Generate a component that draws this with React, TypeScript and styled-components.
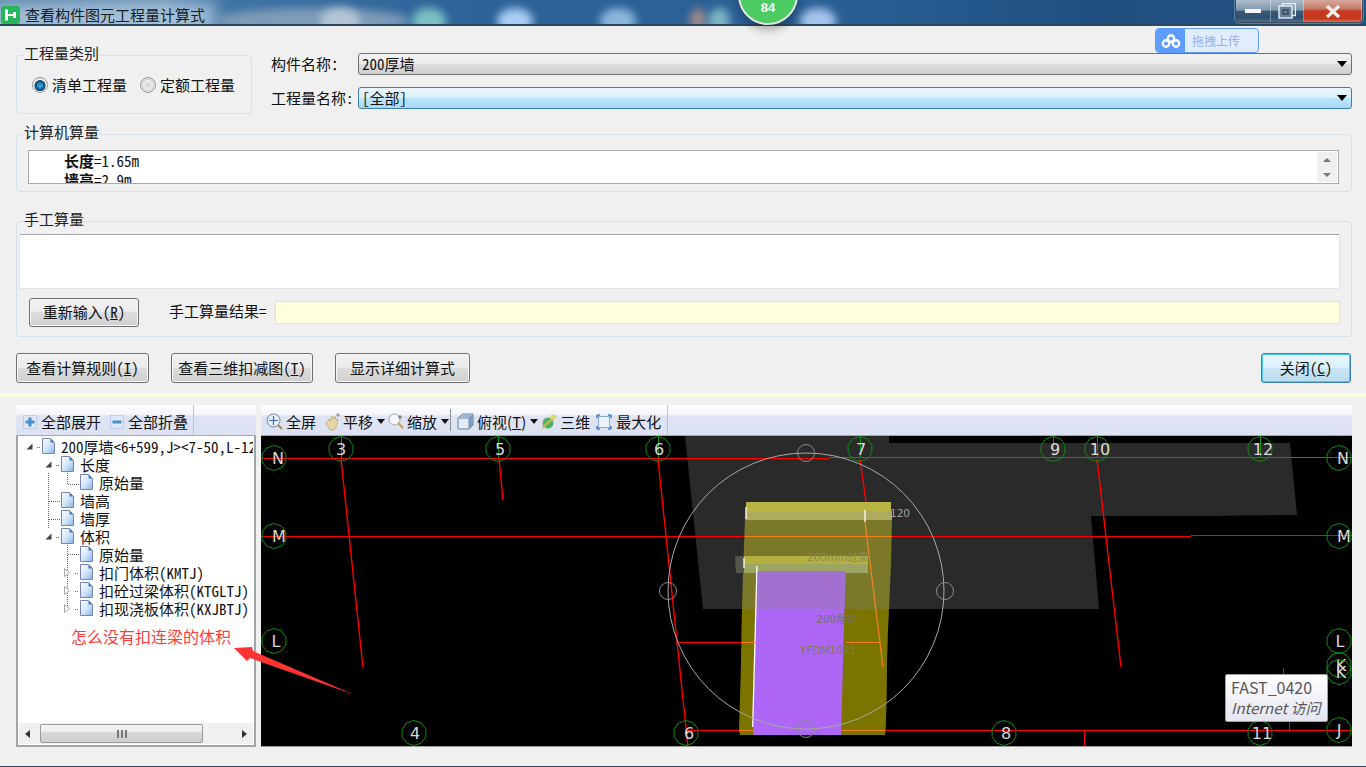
import React from 'react';
import styled, { createGlobalStyle } from 'styled-components';

const uiFont = `"Noto Sans Mono CJK SC", "Noto Sans CJK SC", "Liberation Mono", monospace`;

const GlobalStyle = createGlobalStyle`
  html, body { margin: 0; padding: 0; background: #f0f0f0; }
  * { box-sizing: border-box; }
  body { font-family: ${uiFont}; font-size: 15px; color: #111; }
`;

const Page = styled.div`
  position: relative;
  width: 1366px;
  height: 767px;
  overflow: hidden;
  display: flex;
  flex-direction: column;
  background: #f0f0f0;
`;

// title bar
const TitleBar = styled.div`
  position: relative;
  flex: none;
  height: 26px;
  display: flex;
  align-items: center;
  padding: 5px 0 0 1px;
  overflow: hidden;
  background: linear-gradient(90deg, #5a87ad 0, #6f98ba 12%, #3f73a6 17%, #2c6298 35%, #2a6096 60%, #1f4f82 80%, #23517f 100%);
  border-bottom: 2px solid;
  border-image: linear-gradient(#e6eef5 0 50%, #2c4760 50%) 1;
`;

const TitleGlow = styled.div`
  position: absolute;
  left: -10px;
  top: 4px;
  width: 225px;
  height: 30px;
  background: rgba(205, 222, 236, 0.6);
  filter: blur(7px);
`;

const Blob = styled.div<{ $x: number; $w: number; $c: string }>`
  position: absolute;
  left: ${(p) => p.$x}px;
  top: 8px;
  width: ${(p) => p.$w}px;
  height: 26px;
  border-radius: 50%;
  background: ${(p) => p.$c};
  filter: blur(4px);
`;

const TitleText = styled.span`
  position: relative;
  margin-left: 5px;
  font-family: "Noto Sans CJK SC", sans-serif;
  font-size: 15px;
  line-height: 18px;
  color: #16202a;
`;

const WindowControls = styled.div`
  position: absolute;
  top: 0;
  left: 1235px;
  display: flex;
  height: 23px;
  border: 1px solid #3b4d5e;
  border-top: 0;
  border-radius: 0 0 5px 5px;
  overflow: hidden;
  box-shadow: 0 0 0 1px rgba(255, 255, 255, 0.25);
`;

const ControlBtn = styled.div<{ $w: number; $close?: boolean }>`
  width: ${(p) => p.$w}px;
  display: flex;
  align-items: center;
  justify-content: center;
  border-right: 1px solid rgba(255, 255, 255, 0.35);
  background: ${(p) =>
    p.$close
      ? 'linear-gradient(#d8a79b 0, #c27a68 40%, #c8371f 50%, #c33a20 85%, #e0705a 100%)'
      : 'linear-gradient(#aebdcb 0, #8097ad 45%, #3c5a78 52%, #2f5072 80%, #4d6d8d 100%)'};
`;

const Badge = styled.div`
  position: absolute;
  z-index: 3;
  left: 738px;
  top: -35px;
  width: 60px;
  height: 60px;
  border-radius: 50%;
  background: #4ccb63;
  border: 2px solid #dfe6e0;
  box-shadow: 0 5px 8px rgba(0, 0, 0, 0.3);
  color: #fff;
  font-family: "Liberation Sans", sans-serif;
  font-weight: bold;
  font-size: 13px;
  text-align: center;
  padding-top: 33px;
  line-height: 15px;
`;

const UploadWidget = styled.div`
  position: absolute;
  z-index: 3;
  left: 1155px;
  top: 28px;
  width: 104px;
  height: 25px;
  display: flex;
  align-items: center;
  border: 1px solid #5c9dff;
  border-radius: 4px;
  overflow: hidden;
  background: #e2ecff;
  color: #94aef5;
  font-family: "Noto Sans CJK SC", sans-serif;
  font-size: 12px;
`;

const UploadIcon = styled.div`
  width: 29px;
  height: 100%;
  margin-right: 7px;
  display: flex;
  align-items: center;
  justify-content: center;
  background: #5c9dff;
`;

// form parts
const Section = styled.div`
  padding: 0 14px 0 16px;
`;

const TopRow = styled(Section)`
  display: flex;
  padding-top: 21px;
`;

const Group = styled.fieldset<{ $w?: number; $mt?: number }>`
  margin: ${(p) => p.$mt ?? 0}px 0 0 0;
  padding: 0;
  min-width: 0;
  width: ${(p) => (p.$w ? `${p.$w}px` : '100%')};
  border: 1px solid #d6e0e8;
  border-radius: 4px;
  flex: none;
`;

const Legend = styled.legend`
  position: relative;
  top: -2px;
  margin-left: 7px;
  padding: 0;
  font-size: 15px;
  line-height: 16px;
  color: #222;
`;

const RadioRow = styled.div`
  display: flex;
  align-items: center;
  height: 50px;
  padding: 0 0 7px 15px;
`;

const RadioItem = styled.label`
  display: flex;
  align-items: center;
  gap: 4px;
  margin-right: 13px;
`;

const RadioDot = styled.span<{ $on?: boolean }>`
  width: 16px;
  height: 16px;
  border-radius: 50%;
  border: 1px solid #9a9a9a;
  background: ${(p) =>
    p.$on
      ? 'radial-gradient(circle at 50% 55%, #45b8e8 0, #0f5f96 38%, #0c4368 50%, #f3f3f3 56%, #ddd 100%)'
      : 'radial-gradient(circle, #d5d5d5 0, #eee 50%, #c8c8c8 58%, #f4f4f4 70%, #ddd 100%)'};
`;

const FormCol = styled.div`
  flex: 1;
  margin-left: 19px;
  padding-top: 6px;
  display: flex;
  flex-direction: column;
  gap: 12px;
`;

const FormRow = styled.div`
  display: flex;
  align-items: center;
  height: 22px;
`;

const FormLabel = styled.span`
  width: 87px;
  flex: none;
  white-space: pre;
  padding-bottom: 2px;
`;

const Select = styled.div<{ $active?: boolean }>`
  flex: 1;
  height: 22px;
  display: flex;
  align-items: center;
  justify-content: space-between;
  padding: 0 4px 2px 3px;
  border-radius: 3px;
  border: 1px solid ${(p) => (p.$active ? '#3c7fb1' : '#707070')};
  background: ${(p) =>
    p.$active
      ? 'linear-gradient(#eaf6fd 0, #d9f0fc 50%, #bee6fd 50%, #a7d9f5 100%)'
      : 'linear-gradient(#f2f2f2 0, #ebebeb 50%, #dddddd 50%, #cfcfcf 100%)'};
`;

const Caret = styled.span`
  width: 0;
  height: 0;
  margin-top: 2px;
  border-left: 5px solid transparent;
  border-right: 5px solid transparent;
  border-top: 6px solid #000;
`;

const CalcBox = styled.div`
  position: relative;
  margin: 8px 12px 7px 11px;
  height: 34px;
  background: #fff;
  border: 1px solid #ababab;
  overflow: hidden;
  padding-left: 35px;
  line-height: 19px;
  font-size: 15px;
`;

const CalcLine = styled.div`
  b { font-weight: bold; }
`;

const SpinBar = styled.div`
  position: absolute;
  top: 1px;
  right: 1px;
  bottom: 1px;
  width: 20px;
  background: #f0f0f0;
  display: flex;
  flex-direction: column;
  align-items: center;
  justify-content: center;
  gap: 11px;
`;

const Tick = styled.span<{ $down?: boolean }>`
  width: 0;
  height: 0;
  border-left: 4px solid transparent;
  border-right: 4px solid transparent;
  ${(p) => (p.$down ? 'border-top: 4px solid #777;' : 'border-bottom: 4px solid #777;')}
`;

const ManualArea = styled.div`
  margin: 5px 11px 0 2px;
  height: 55px;
  background: #fff;
  border: 1px solid #e2e2e6;
  border-top: 1px solid #a4a4ac;
  border-radius: 2px;
`;

const ManualRow = styled.div`
  display: flex;
  align-items: flex-start;
  height: 47px;
  padding: 9px 11px 0 12px;
`;

const Button = styled.button<{ $w: number; $h?: number; $focus?: boolean; $ml?: number }>`
  width: ${(p) => p.$w}px;
  height: ${(p) => p.$h ?? 30}px;
  margin-left: ${(p) => p.$ml ?? 0}px;
  padding: 0 0 2px;
  flex: none;
  font-family: inherit;
  font-size: 15px;
  color: #111;
  border-radius: 3px;
  border: 1px solid ${(p) => (p.$focus ? '#3c7fb1' : '#707070')};
  background: ${(p) =>
    p.$focus
      ? 'linear-gradient(#eaf6fd 0, #d9f0fc 50%, #cbe6f5 50%, #b8dcee 100%)'
      : 'linear-gradient(#f2f2f2 0, #ebebeb 50%, #dddddd 50%, #cfcfcf 100%)'};
  box-shadow: ${(p) => (p.$focus ? 'inset 0 0 0 1px #47c8f0' : 'inset 0 0 0 1px #f8f8f8')};
  u { text-underline-offset: 1px; }
`;

const ResultLabel = styled.span`
  margin: 2px 0 0 30px;
  width: 106px;
  flex: none;
`;

const ResultInput = styled.div`
  flex: 1;
  height: 23px;
  margin-top: 3px;
  background: #ffffe0;
  border: 1px solid #e0e0e0;
`;

const ActionRow = styled(Section)`
  display: flex;
  margin-top: 16px;
  padding-right: 15px;
`;

const Divider = styled.div`
  height: 4px;
  margin-top: 10px;
  background: #fdfde3;
`;

const Workspace = styled(Section)`
  display: flex;
  gap: 5px;
  margin-top: 8px;
  height: 342px;
`;

const TreePanel = styled.div`
  position: relative;
  width: 240px;
  flex: none;
  display: flex;
  flex-direction: column;
`;

const ViewPanel = styled.div`
  flex: 1;
  display: flex;
  flex-direction: column;
  min-width: 0;
`;

const Toolbar = styled.div`
  position: relative;
  height: 31px;
  flex: none;
  display: flex;
  align-items: center;
  padding: 3px 0 0 5px;
  white-space: nowrap;
  font-family: "Noto Sans CJK SC", sans-serif;
  background: linear-gradient(#fdfdfe 0, #f5f6fb 30%, #dfe4f4 38%, #dde2f3 100%);
  border-bottom: 1px solid #a8a8a8;
`;

const ToolSep = styled.span<{ $x: number; $dark?: boolean }>`
  position: absolute;
  left: ${(p) => p.$x}px;
  top: ${(p) => (p.$dark ? 4 : 0)}px;
  bottom: ${(p) => (p.$dark ? 4 : 0)}px;
  width: 1px;
  background: ${(p) => (p.$dark ? '#8a8d96' : '#c0c3cc')};
`;

const ToolIcon = styled.span<{ $ml?: number; $mr?: number }>`
  display: inline-flex;
  margin-left: ${(p) => p.$ml ?? 0}px;
  margin-right: ${(p) => p.$mr ?? 4}px;
`;

const ToolCaret = styled.span<{ $ml?: number; $mr?: number }>`
  width: 0;
  height: 0;
  margin-left: ${(p) => p.$ml ?? 4}px;
  margin-right: ${(p) => p.$mr ?? 3}px;
  border-left: 4px solid transparent;
  border-right: 4px solid transparent;
  border-top: 5px solid #111;
`;

const TreeBody = styled.div`
  position: relative;
  flex: 1;
  display: flex;
  flex-direction: column;
  border: solid #a0a5aa;
  border-width: 0 2px 2px 2px;
  background: #fff;
  min-height: 0;
`;

const TreeRows = styled.div`
  position: relative;
  flex: 1;
  margin-right: 1px;
  padding-top: 1px;
  overflow: hidden;
`;

const TreeRow = styled.div<{ $level: number }>`
  position: relative;
  display: flex;
  align-items: center;
  height: 18px;
  padding-left: ${(p) => 8 + p.$level * 19}px;
  white-space: nowrap;
`;

const Expander = styled.span`
  width: 16px;
  flex: none;
  display: flex;
  align-items: center;
`;

const DocIcon = styled.span`
  display: inline-flex;
  flex: none;
  margin-right: 6px;
`;

const HScroll = styled.div`
  flex: none;
  height: 21px;
  margin: 1px;
  display: flex;
  align-items: center;
  background: #f0f0f0;
  padding: 0 6px;
`;

const Thumb = styled.div`
  width: 163px;
  height: 19px;
  margin-left: 10px;
  margin-right: auto;
  border: 1px solid #9a9a9a;
  border-radius: 2px;
  background: linear-gradient(#f4f4f4 0, #ececec 40%, #d6d6d6 45%, #cfcfcf 100%);
  display: flex;
  align-items: center;
  justify-content: center;
  gap: 2px;
`;

const Grip = styled.i`
  width: 2px;
  height: 8px;
  background: #777;
`;

const SideArrow = styled.span<{ $dir: 'left' | 'right' }>`
  width: 0;
  height: 0;
  border-top: 4px solid transparent;
  border-bottom: 4px solid transparent;
  ${(p) => (p.$dir === 'left' ? 'border-right: 5px solid #333;' : 'border-left: 5px solid #333;')}
`;

const CanvasWrap = styled.div`
  position: relative;
  flex: 1;
  min-height: 0;
  background: #000;
  border-bottom: 1px solid #9a9a9a;
`;

const CadSvg = styled.svg`
  display: block;
  width: 1091px;
  height: 310px;
`;

const ConnectorSvg = styled.svg`
  position: absolute;
  left: 0;
  top: 0;
  pointer-events: none;
`;

const Tooltip = styled.div`
  position: absolute;
  left: 964px;
  top: 238px;
  width: 103px;
  height: 48px;
  padding: 2px 0 0 5px;
  background: linear-gradient(#fff 0, #e4e5f0 100%);
  border: 1px solid #a0a0a0;
  border-radius: 2px;
  color: #575757;
  font-family: "Noto Sans CJK SC", sans-serif;
  font-size: 16px;
  line-height: 20px;
  white-space: nowrap;
  overflow: hidden;
  em { font-size: 15px; }
`;

const Note = styled.div`
  position: absolute;
  z-index: 4;
  left: 71px;
  top: 626px;
  color: #ff3b3b;
  font-family: "Noto Sans CJK SC", sans-serif;
  font-size: 16px;
  line-height: 20px;
  white-space: nowrap;
`;

const NoteArrow = styled.svg`
  position: absolute;
  z-index: 4;
  left: 230px;
  top: 640px;
`;

const Footer = styled.div`
  flex: 1;
  position: relative;
  border-bottom: 1px solid #33475a;
`;

// drawings
const Doc = () => (
  <svg width="13" height="16" viewBox="0 0 13 16">
    <defs>
      <linearGradient id="docFill" x1="0" y1="0" x2="1" y2="1">
        <stop offset="0" stopColor="#ffffff" />
        <stop offset="0.55" stopColor="#cfe3f7" />
        <stop offset="1" stopColor="#7fb4e6" />
      </linearGradient>
    </defs>
    <path d="M.5.5H8.5L12.5 4.5V15.5H.5Z" fill="url(#docFill)" stroke="#7a82b8" />
    <path d="M8.5.5V4.5H12.5Z" fill="#3f7fc9" />
  </svg>
);

const TreeTriangle = ({ open }: { open: boolean }) =>
  open ? (
    <svg width="7" height="7" viewBox="0 0 7 7"><path d="M6.5 .5V6.5H.5Z" fill="#444" /></svg>
  ) : (
    <svg width="6" height="9" viewBox="0 0 6 9"><path d="M.5 .5L5.5 4.5L.5 8.5Z" fill="#fff" stroke="#a8a8a8" /></svg>
  );

const PlusMinus = ({ plus }: { plus?: boolean }) => (
  <svg width="14" height="14" viewBox="0 0 14 14">
    <rect x=".5" y=".5" width="13" height="13" fill="#dfe6f6" stroke="#c3cce4" />
    <rect x="2.5" y="5.5" width="9" height="3" fill="#4a8fc9" />
    {plus && <rect x="5.5" y="2.5" width="3" height="9" fill="#4a8fc9" />}
  </svg>
);

const ZoomFullIcon = () => (
  <svg width="17" height="17" viewBox="0 0 17 17">
    <circle cx="7.5" cy="7.5" r="6.5" fill="#e8eef8" stroke="#7e8aa6" />
    <path d="M7.5 3v9M3 7.5h9" stroke="#3a6fb0" strokeWidth="1.2" />
    <path d="M12 12l4 4" stroke="#a08a5a" strokeWidth="2" />
  </svg>
);

const HandIcon = () => (
  <svg width="17" height="18" viewBox="0 0 17 18">
    <path d="M2 11l3-5 1 2 2-5 1 3 2-3 1 4 2-1-1 6-3 5H6Z" fill="#e4d7a8" stroke="#b8a468" strokeDasharray="2 1" />
    <path d="M12 2h4M14 0v4" stroke="#8a8a8a" />
  </svg>
);

const ZoomInIcon = () => (
  <svg width="16" height="17" viewBox="0 0 16 17">
    <circle cx="6.5" cy="6.5" r="5.5" fill="#f4f6fb" stroke="#a0a6b4" />
    <path d="M10 10l5 5" stroke="#c2a04c" strokeWidth="2" />
    <path d="M12 2v4M10 4h4" stroke="#6a6a6a" />
  </svg>
);

const CubeIcon = () => (
  <svg width="17" height="17" viewBox="0 0 17 17">
    <path d="M1 5L5 1H16V12L12 16H1Z" fill="#e4edf7" stroke="#6a7f9a" />
    <path d="M1 5H12V16M12 5L16 1" fill="none" stroke="#6a7f9a" />
    <path d="M1 5L5 1H16L12 5Z" fill="#9db6d3" />
    <path d="M12 5L16 1V12L12 16Z" fill="#7d9cc0" />
  </svg>
);

const PlanetIcon = () => (
  <svg width="16" height="17" viewBox="0 0 16 17">
    <circle cx="7" cy="10" r="5.5" fill="#58b065" />
    <path d="M1 15L15 3" stroke="#c8c050" strokeWidth="2" />
    <circle cx="12" cy="4" r="2.5" fill="#e2d66a" />
  </svg>
);

const MaximizeIcon = () => (
  <svg width="16" height="16" viewBox="0 0 16 16">
    <rect x="2.5" y="2.5" width="11" height="11" fill="#eef2fa" stroke="#8aa8d0" />
    <path d="M1 1h3M1 1v3M15 1h-3M15 1v3M1 15h3M1 15v-3M15 15h-3M15 15v-3" stroke="#3f86d6" strokeWidth="1.6" fill="none" />
  </svg>
);

const bubblePoints = (cx: number, cy: number, r: number) =>
  Array.from({ length: 10 }, (_, i) => {
    const a = (Math.PI * 2 * i) / 10 - Math.PI / 2;
    return `${(cx + r * Math.cos(a)).toFixed(1)},${(cy + r * Math.sin(a)).toFixed(1)}`;
  }).join(' ');

const bubbles = [
  { t: 'N', x: 274, y: 458, tx: 278 },
  { t: 'M', x: 274, y: 536, tx: 279 },
  { t: 'L', x: 274, y: 641, tx: 276 },
  { t: '3', x: 341, y: 449, tx: 341 },
  { t: '5', x: 498, y: 449, tx: 500 },
  { t: '6', x: 658, y: 449, tx: 659 },
  { t: '7', x: 860, y: 449, tx: 861 },
  { t: '9', x: 1053, y: 449, tx: 1055 },
  { t: '10', x: 1097, y: 449, tx: 1100 },
  { t: '12', x: 1260, y: 449, tx: 1263 },
  { t: 'N', x: 1339, y: 458, tx: 1343 },
  { t: 'M', x: 1339, y: 536, tx: 1344 },
  { t: 'L', x: 1339, y: 641, tx: 1340 },
  { t: 'K', x: 1339, y: 665, tx: 1341 },
  { t: 'K', x: 1339, y: 672, tx: 1341 },
  { t: 'J', x: 1339, y: 730, tx: 1339 },
  { t: '4', x: 414, y: 733, tx: 415 },
  { t: '6', x: 686, y: 733, tx: 689 },
  { t: '8', x: 1004, y: 733, tx: 1006 },
  { t: '11', x: 1260, y: 733, tx: 1262 },
];

const crispRed = [
  'M261 458.5H830',
  'M261 536.5H1191',
  'M1191 535.5H1352',
  'M686 730.5H1352',
  'M677 642.5H742',
  'M1084.5 730V747',
  'M1283.5 668V675',
  'M1289.5 722V730',
];

const slantRed = [
  'M341 459L363 668',
  'M499 459L503 500',
  'M658 459L688 747',
  'M860 459L866 502',
  'M1097 459L1121 667',
];

const CadDrawing = () => (
  <CadSvg viewBox="261 436 1091 310">
    <path d="M685 436L703 609H1099L1091 516H1196L1297 515L1290 443H889V436Z" fill="#2a2a2a" />
    <path d="M830 457.5H1352" stroke="#c83030" shapeRendering="crispEdges" />
    {crispRed.map((d) => (
      <path key={d} d={d} stroke="#f00" shapeRendering="crispEdges" fill="none" />
    ))}
    {slantRed.map((d) => (
      <path key={d} d={d} stroke="#f00" strokeWidth="1.4" fill="none" />
    ))}
    <path d="M745 519L746 511H892V519L891 563L889 609H742L743 573Z" fill="#7c7829" />
    <path d="M742 609L741.5 630L741 663L740 697L739 730L740 735H885L885.7 730L886.7 697L887 663L888 630L889 609Z" fill="#7b7500" />
    <path d="M746 502H891V511H746Z" fill="#b8b443" />
    <path d="M746 511H892V520H746Z" fill="#aeaa60" />
    <path d="M745 536.5H892" stroke="#f08020" shapeRendering="crispEdges" />
    <path d="M735 556H745V573H736Z" fill="#55564a" />
    <path d="M744 556H868V564H744Z" fill="#b3b03f" />
    <path d="M744 564H868V573H744Z" fill="#9da562" />
    <path d="M758 571H846L844.5 609H756Z" fill="#a170d0" />
    <path d="M756 609H844.5L841 735H753Z" fill="#ad66f5" />
    <path d="M757 566L752.7 727M746 507V519M744 558V568M865 510V522" stroke="#fff" strokeWidth="1.3" fill="none" />
    <path d="M865 522L883 667" stroke="#f08020" strokeWidth="1.3" fill="none" />
    <path d="M742 642.5H756M846 642.5H880M739 730.5H753M841 730.5H885" stroke="#f08020" shapeRendering="crispEdges" fill="none" />
    <circle cx="806" cy="591" r="138" fill="none" stroke="#a8a8a8" />
    <circle cx="806" cy="453" r="8.5" fill="none" stroke="#8a8a8a" />
    <circle cx="668" cy="591" r="8.5" fill="none" stroke="#8a8a8a" />
    <circle cx="945" cy="591" r="8.5" fill="none" stroke="#8a8a8a" />
    <circle cx="806" cy="729" r="8.5" fill="none" stroke="#8a8a8a" />
    <g fontFamily='"DejaVu Sans", "Noto Sans CJK SC", sans-serif' fontSize="10.5">
      <text x="890" y="517" fill="#a0a0a0">120</text>
      <text x="807" y="561" fill="#8c8c52">200mm过梁</text>
      <text x="816" y="623" fill="#70706a">200厚墙</text>
      <text x="800" y="654" fill="#7d7d40">YFDM1021</text>
    </g>
    {[341, 498, 658, 860, 1053, 1097, 1260].map((x) => (
      <path key={x} d={`M${x}.5 437V458`} stroke="#0c8f0c" />
    ))}
    {bubbles.map((b, i) => (
      <g key={i}>
        <polygon points={bubblePoints(b.x, b.y, 12.5)} fill="none" stroke="#0c8f0c" />
        <text x={b.tx} y={b.y + 6} textAnchor="middle" fontFamily='"DejaVu Sans", sans-serif' fontSize="16" fill="#dadada">{b.t}</text>
      </g>
    ))}
  </CadSvg>
);

type TreeItem = { label: string; level: number; exp?: 'open' | 'closed' };

const treeItems: TreeItem[] = [
  { label: '200厚墙<6+599,J><7-50,L-120>', level: 0, exp: 'open' },
  { label: '长度', level: 1, exp: 'open' },
  { label: '原始量', level: 2 },
  { label: '墙高', level: 1 },
  { label: '墙厚', level: 1 },
  { label: '体积', level: 1, exp: 'open' },
  { label: '原始量', level: 2 },
  { label: '扣门体积(KMTJ)', level: 2, exp: 'closed' },
  { label: '扣砼过梁体积(KTGLTJ)', level: 2, exp: 'closed' },
  { label: '扣现浇板体积(KXJBTJ)', level: 2, exp: 'closed' },
];

export default function App() {
  return (
    <Page>
      <GlobalStyle />
      <TitleBar>
        <TitleGlow />
        <Blob $x={215} $w={195} $c="#7f9bb8" />
        <Blob $x={320} $w={40} $c="#b4c6d6" />
        <Blob $x={412} $w={34} $c="#7cc0c4" />
        <Blob $x={497} $w={36} $c="#a9cdf4" />
        <Blob $x={600} $w={36} $c="#8cb6dd" />
        <Blob $x={690} $w={16} $c="#a08a8a" />
        <Blob $x={708} $w={22} $c="#7fb4c4" />
        <Blob $x={800} $w={36} $c="#a6c4ea" />
        <svg width="19" height="18" viewBox="0 0 19 18" style={{ position: 'relative' }}>
          <rect width="19" height="18" rx="3" fill="#27b55a" />
          <path d="M4 3.5H7V8H12V6H15V12H12V10H7V14.5H4Z" fill="#fff" />
        </svg>
        <TitleText>查看构件图元工程量计算式</TitleText>
        <WindowControls>
          <ControlBtn $w={35}>
            <svg width="16" height="4"><rect width="16" height="4" fill="#f4f6f8" /></svg>
          </ControlBtn>
          <ControlBtn $w={33}>
            <svg width="18" height="16" viewBox="0 0 18 16">
              <rect x="4.5" y=".5" width="13" height="12" fill="none" stroke="#e8eef4" strokeWidth="1.4" />
              <rect x="1" y="3" width="13" height="12" fill="#6a8298" stroke="#e8eef4" strokeWidth="1.4" />
              <rect x="5" y="7" width="5" height="4" fill="none" stroke="#33485c" strokeWidth="1.4" />
            </svg>
          </ControlBtn>
          <ControlBtn $w={58} $close>
            <svg width="16" height="13" viewBox="0 0 16 13">
              <path d="M2 1L14 12M14 1L2 12" stroke="#f4eeea" strokeWidth="3.4" />
            </svg>
          </ControlBtn>
        </WindowControls>
      </TitleBar>
      <Badge>84</Badge>
      <UploadWidget>
        <UploadIcon>
          <svg width="20" height="14" viewBox="0 0 20 14">
            <g fill="none" stroke="#fff" strokeWidth="2.4">
              <circle cx="10" cy="4.5" r="3.2" />
              <circle cx="5" cy="9.5" r="3.2" />
              <circle cx="15" cy="9.5" r="3.2" />
            </g>
          </svg>
        </UploadIcon>
        拖拽上传
      </UploadWidget>

      <TopRow>
        <Group $w={236}>
          <Legend>工程量类别</Legend>
          <RadioRow>
            <RadioItem><RadioDot $on />清单工程量</RadioItem>
            <RadioItem><RadioDot />定额工程量</RadioItem>
          </RadioRow>
        </Group>
        <FormCol>
          <FormRow>
            <FormLabel>构件名称：</FormLabel>
            <Select>200厚墙<Caret /></Select>
          </FormRow>
          <FormRow>
            <FormLabel>工程量名称:</FormLabel>
            <Select $active>[全部]<Caret /></Select>
          </FormRow>
        </FormCol>
      </TopRow>

      <Section>
        <Group $mt={12}>
          <Legend>计算机算量</Legend>
          <CalcBox>
            <CalcLine><b>长度</b>=1.65m</CalcLine>
            <CalcLine><b>墙高</b>=2.9m</CalcLine>
            <SpinBar><Tick /><Tick $down /></SpinBar>
          </CalcBox>
        </Group>
        <Group $mt={21}>
          <Legend>手工算量</Legend>
          <ManualArea />
          <ManualRow>
            <Button $w={110} $h={29}>重新输入(<u>R</u>)</Button>
            <ResultLabel>手工算量结果=</ResultLabel>
            <ResultInput />
          </ManualRow>
        </Group>
      </Section>

      <ActionRow>
        <Button $w={133}>查看计算规则(<u>I</u>)</Button>
        <Button $w={142} $ml={22}>查看三维扣减图(<u>T</u>)</Button>
        <Button $w={135} $ml={22}>显示详细计算式</Button>
        <Button $w={90} $ml={791} $focus>关闭(<u>C</u>)</Button>
      </ActionRow>

      <Divider />

      <Workspace>
        <TreePanel>
          <Toolbar>
            <ToolIcon $ml={2} $mr={4}><PlusMinus plus /></ToolIcon>全部展开
            <ToolIcon $ml={9} $mr={4}><PlusMinus /></ToolIcon>全部折叠
            <ToolSep $x={177} />
          </Toolbar>
          <TreeBody>
            <TreeRows>
              <ConnectorSvg width="236" height="190">
                <path
                  d="M19 11.5H23M38 29.5H42M38 101.5H42M30.5 37V92M31 65.5H42M31 83.5H42M49.5 37V48M50 48.5H61M49.5 109V175M50 118.5H61M57 137.5H61M57 155.5H61M57 173.5H61"
                  stroke="#666"
                  strokeDasharray="1 1"
                  fill="none"
                />
              </ConnectorSvg>
              {treeItems.map((it, i) => (
                <TreeRow key={i} $level={it.level}>
                  <Expander>{it.exp && <TreeTriangle open={it.exp === 'open'} />}</Expander>
                  <DocIcon><Doc /></DocIcon>
                  {it.label}
                </TreeRow>
              ))}
            </TreeRows>
            <HScroll>
              <SideArrow $dir="left" />
              <Thumb><Grip /><Grip /><Grip /></Thumb>
              <SideArrow $dir="right" />
            </HScroll>
          </TreeBody>
        </TreePanel>
        <ViewPanel>
          <Toolbar>
            <ToolIcon $mr={3}><ZoomFullIcon /></ToolIcon>全屏
            <ToolIcon $ml={8} $mr={2}><HandIcon /></ToolIcon>平移
            <ToolCaret />
            <ToolIcon $ml={0} $mr={3}><ZoomInIcon /></ToolIcon>缩放
            <ToolCaret $mr={8} />
            <ToolIcon $mr={3}><CubeIcon /></ToolIcon>俯视(<u>T</u>)
            <ToolCaret />
            <ToolIcon $ml={0} $mr={3}><PlanetIcon /></ToolIcon>三维
            <ToolIcon $ml={6} $mr={4}><MaximizeIcon /></ToolIcon>最大化
            <ToolSep $x={189} $dark />
            <ToolSep $x={406} />
          </Toolbar>
          <CanvasWrap>
            <CadDrawing />
            <Tooltip>
              FAST_0420
              <br />
              <em>Internet 访问</em>
            </Tooltip>
          </CanvasWrap>
        </ViewPanel>
      </Workspace>
      <Note>怎么没有扣连梁的体积</Note>
      <NoteArrow width="126" height="58" viewBox="230 640 126 58">
        <path d="M234 648L252 647L253 651L353.5 694.5L250 658L247 661Z" fill="#f33" />
      </NoteArrow>
      <Footer />
    </Page>
  );
}
